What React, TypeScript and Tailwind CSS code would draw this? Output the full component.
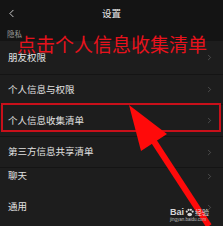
import { ChevronLeft, ChevronRight } from 'lucide-react';

const rows = [
  { label: '朋友权限', h: 'h-[34px]' },
  { label: '个人信息与权限', h: 'h-[30px]' },
  { label: '个人信息收集清单', h: 'h-[32px]' },
  { label: '第三方信息共享清单', h: 'h-[31px]' },
];

function Row({ label, h }: { label: string; h: string }) {
  return (
    <div className={`${h} flex items-center justify-between pl-2 pr-[9px] bg-[#1d1d1d] border-b border-[#141414]`}>
      <span className="text-[9.5px] leading-none text-[#e2e2e2]">{label}</span>
      <ChevronRight size={9} strokeWidth={1.6} className="text-[#6a6a6a]" />
    </div>
  );
}

export default function App() {
  return (
    <div className="relative w-[223px] h-[226px] overflow-hidden bg-[#141414]" style={{ fontFamily: '"Noto Sans CJK SC", "Noto Sans", sans-serif' }}>
      {/* header */}
      <div className="h-[27px] flex items-center relative">
        <ChevronLeft size={13} strokeWidth={1.6} className="text-[#e6e6e6] ml-[5px]" />
        <span className="absolute left-0 right-0 text-center text-[9.5px] leading-none text-[#ececec]">设置</span>
      </div>
      <div className="h-[14px] pl-[7px] pt-[3px] text-[7.5px] leading-none text-[#9a9a9a]">隐私</div>

      <div className="flex flex-col">
        {rows.map((r) => (
          <Row key={r.label} label={r.label} h={r.h} />
        ))}
        <div className="h-[16px] flex items-center justify-between pl-2 pr-[9px] bg-[#1d1d1d]">
          <span className="text-[9.5px] leading-none text-[#e2e2e2]">聊天</span>
          <ChevronRight size={9} strokeWidth={1.6} className="text-[#6a6a6a]" />
        </div>
        <div className="h-[46px] flex items-center justify-between pl-2 pr-[9px] bg-[#1d1d1d]">
          <span className="text-[9.5px] leading-none text-[#e2e2e2]">通用</span>
          <ChevronRight size={9} strokeWidth={1.6} className="text-[#6a6a6a]" />
        </div>
      </div>

      {/* annotation overlay */}
      <div className="absolute left-[17px] top-[34px] text-[19px] leading-none text-[#e8121c] whitespace-nowrap">点击个人信息收集清单</div>
      <div className="absolute left-[1px] top-[103px] w-[220px] h-[29px] border-2 border-[#c8101a]" />
      <svg className="absolute left-0 top-0" width="223" height="226" viewBox="0 0 223 226">
        <polygon points="129,105 141,151 167,134" fill="#ff0a0a" />
        <line x1="153" y1="140" x2="209" y2="226" stroke="#ff0a0a" strokeWidth="6" />
      </svg>

      {/* watermark */}
      <div className="absolute left-[170px] top-[208px] flex flex-col items-start">
        <div className="flex items-center">
          <span className="text-[9px] font-bold leading-none text-[#d8d8d8]" style={{ fontFamily: '"Liberation Sans", sans-serif' }}>Bai</span>
          <svg width="9" height="9" viewBox="0 0 10 10" className="mx-[1px]">
            <circle cx="2" cy="4" r="1.2" fill="#d8d8d8" />
            <circle cx="4" cy="2" r="1.2" fill="#d8d8d8" />
            <circle cx="6.5" cy="2" r="1.2" fill="#d8d8d8" />
            <circle cx="8.5" cy="4" r="1.2" fill="#d8d8d8" />
            <ellipse cx="5.2" cy="7.3" rx="2.6" ry="2" fill="#d8d8d8" />
          </svg>
          <span className="text-[7px] leading-none text-[#d8d8d8]">经验</span>
        </div>
        <span className="text-[4.5px] leading-none text-[#bdbdbd] mt-[1px]" style={{ fontFamily: '"Liberation Sans", sans-serif' }}>jingyan.baidu.com</span>
      </div>
    </div>
  );
}
